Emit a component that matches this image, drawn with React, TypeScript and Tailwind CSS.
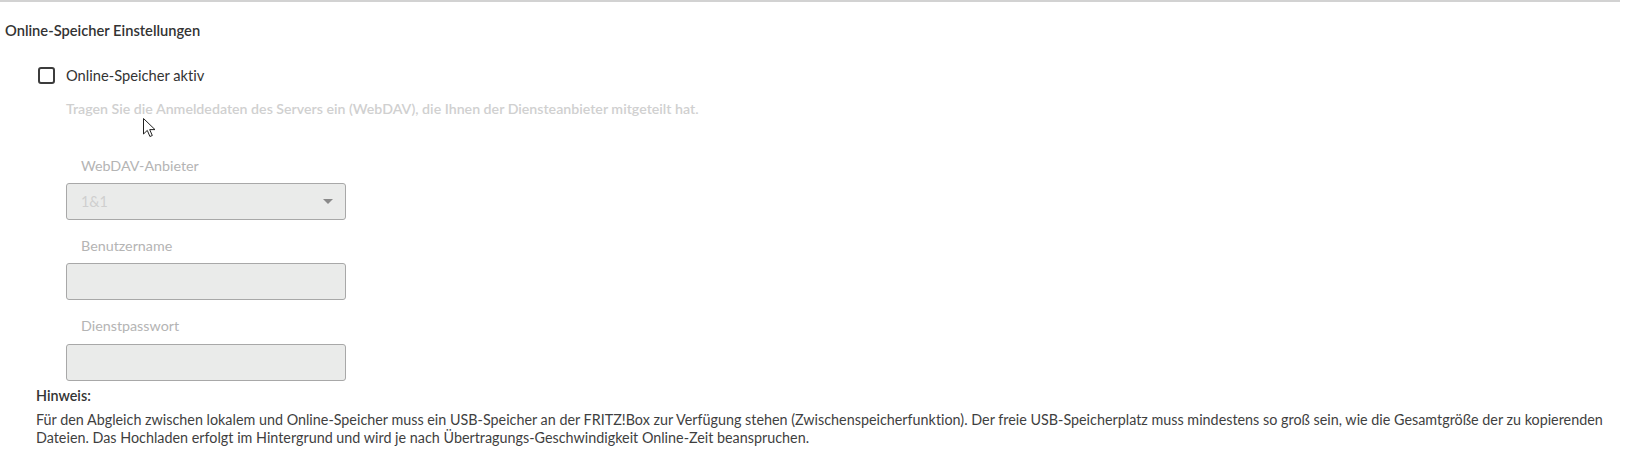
import React from "react";

const font = { fontFamily: "Lato, 'Noto Sans', sans-serif", fontVariantLigatures: "none" as const };

function Field({ label, children }: { label: string; children: React.ReactNode }) {
  return (
    <div className="flex flex-col">
      <div className="pl-[15px] text-[14.3px] leading-[20px] text-[#b4b4b4]">{label}</div>
      {children}
    </div>
  );
}

function DisabledInput({ extra = "" }: { extra?: string }) {
  return <div className={`h-[37px] w-[280px] rounded-[3px] border border-[#a8a8a8] bg-[#eaebea] ${extra}`} />;
}

export default function App() {
  return (
    <div className="relative min-h-[476px] w-[1627px] bg-white text-[14.35px] text-[#3a3a3a]" style={font}>
      <div className="mr-[7px] h-[2px] bg-[#d2d2d2]" />

      <h2 className="ml-[5px] mt-[18px] text-[14.7px] font-semibold leading-[20px] text-[#333]">
        Online-Speicher Einstellungen
      </h2>

      <label className="ml-[38px] mt-[25px] flex items-center gap-[11px] leading-[20px]">
        <span className="h-[17px] w-[17px] rounded-[3px] border-2 border-[#3c3c3c] bg-white" />
        <span className="text-[14.7px] text-[#333]">Online-Speicher aktiv</span>
      </label>

      <div className="ml-[66px] mt-[14px] flex flex-col">
        <p className="text-[14.2px] leading-[20px] font-semibold text-[#d0d0d0]">
          Tragen Sie die Anmeldedaten des Servers ein (WebDAV), die Ihnen der Diensteanbieter mitgeteilt hat.
        </p>

        <div className="mt-[37px] flex flex-col gap-[16px]">
          <Field label="WebDAV-Anbieter">
            <div className="mt-[7px] flex h-[37px] w-[280px] items-center justify-between rounded-[3px] border border-[#a8a8a8] bg-[#eaebea] pl-[14px] pr-[12px]">
              <span className="text-[#cfcfcf]">1&amp;1</span>
              <svg width="10" height="6" viewBox="0 0 10 6">
                <path d="M0 0h10L5 5z" fill="#8a8a8a" />
              </svg>
            </div>
          </Field>
          <Field label="Benutzername">
            <DisabledInput extra="mt-[7px]" />
          </Field>
          <Field label="Dienstpasswort">
            <DisabledInput extra="mt-[8px]" />
          </Field>
        </div>
      </div>

      <div className="ml-[36px] mt-[5px] flex flex-col gap-[5px]">
        <div className="font-semibold leading-[20px] text-[#333]">Hinweis:</div>
        <p className="pr-[12px] leading-[18px] text-[#3f3f3f]">
          Für den Abgleich zwischen lokalem und Online-Speicher muss ein USB-Speicher an der FRITZ!Box zur Verfügung
          stehen (Zwischenspeicherfunktion). Der freie USB-Speicherplatz muss mindestens so groß sein, wie die
          Gesamtgröße der zu kopierenden Dateien. Das Hochladen erfolgt im Hintergrund und wird je nach
          Übertragungs-Geschwindigkeit Online-Zeit beanspruchen.
        </p>
      </div>

      {/* mouse pointer over the form */}
      <svg className="absolute left-[143px] top-[118px]" width="13" height="20" viewBox="0 0 13 20">
        <path
          d="M0.5 0.5v15.5l3.8-3.6 2.6 6.1 2.4-1-2.6-5.9h5.3z"
          fill="#fff"
          stroke="#222"
          strokeWidth="1"
          strokeLinejoin="round"
        />
      </svg>
    </div>
  );
}
